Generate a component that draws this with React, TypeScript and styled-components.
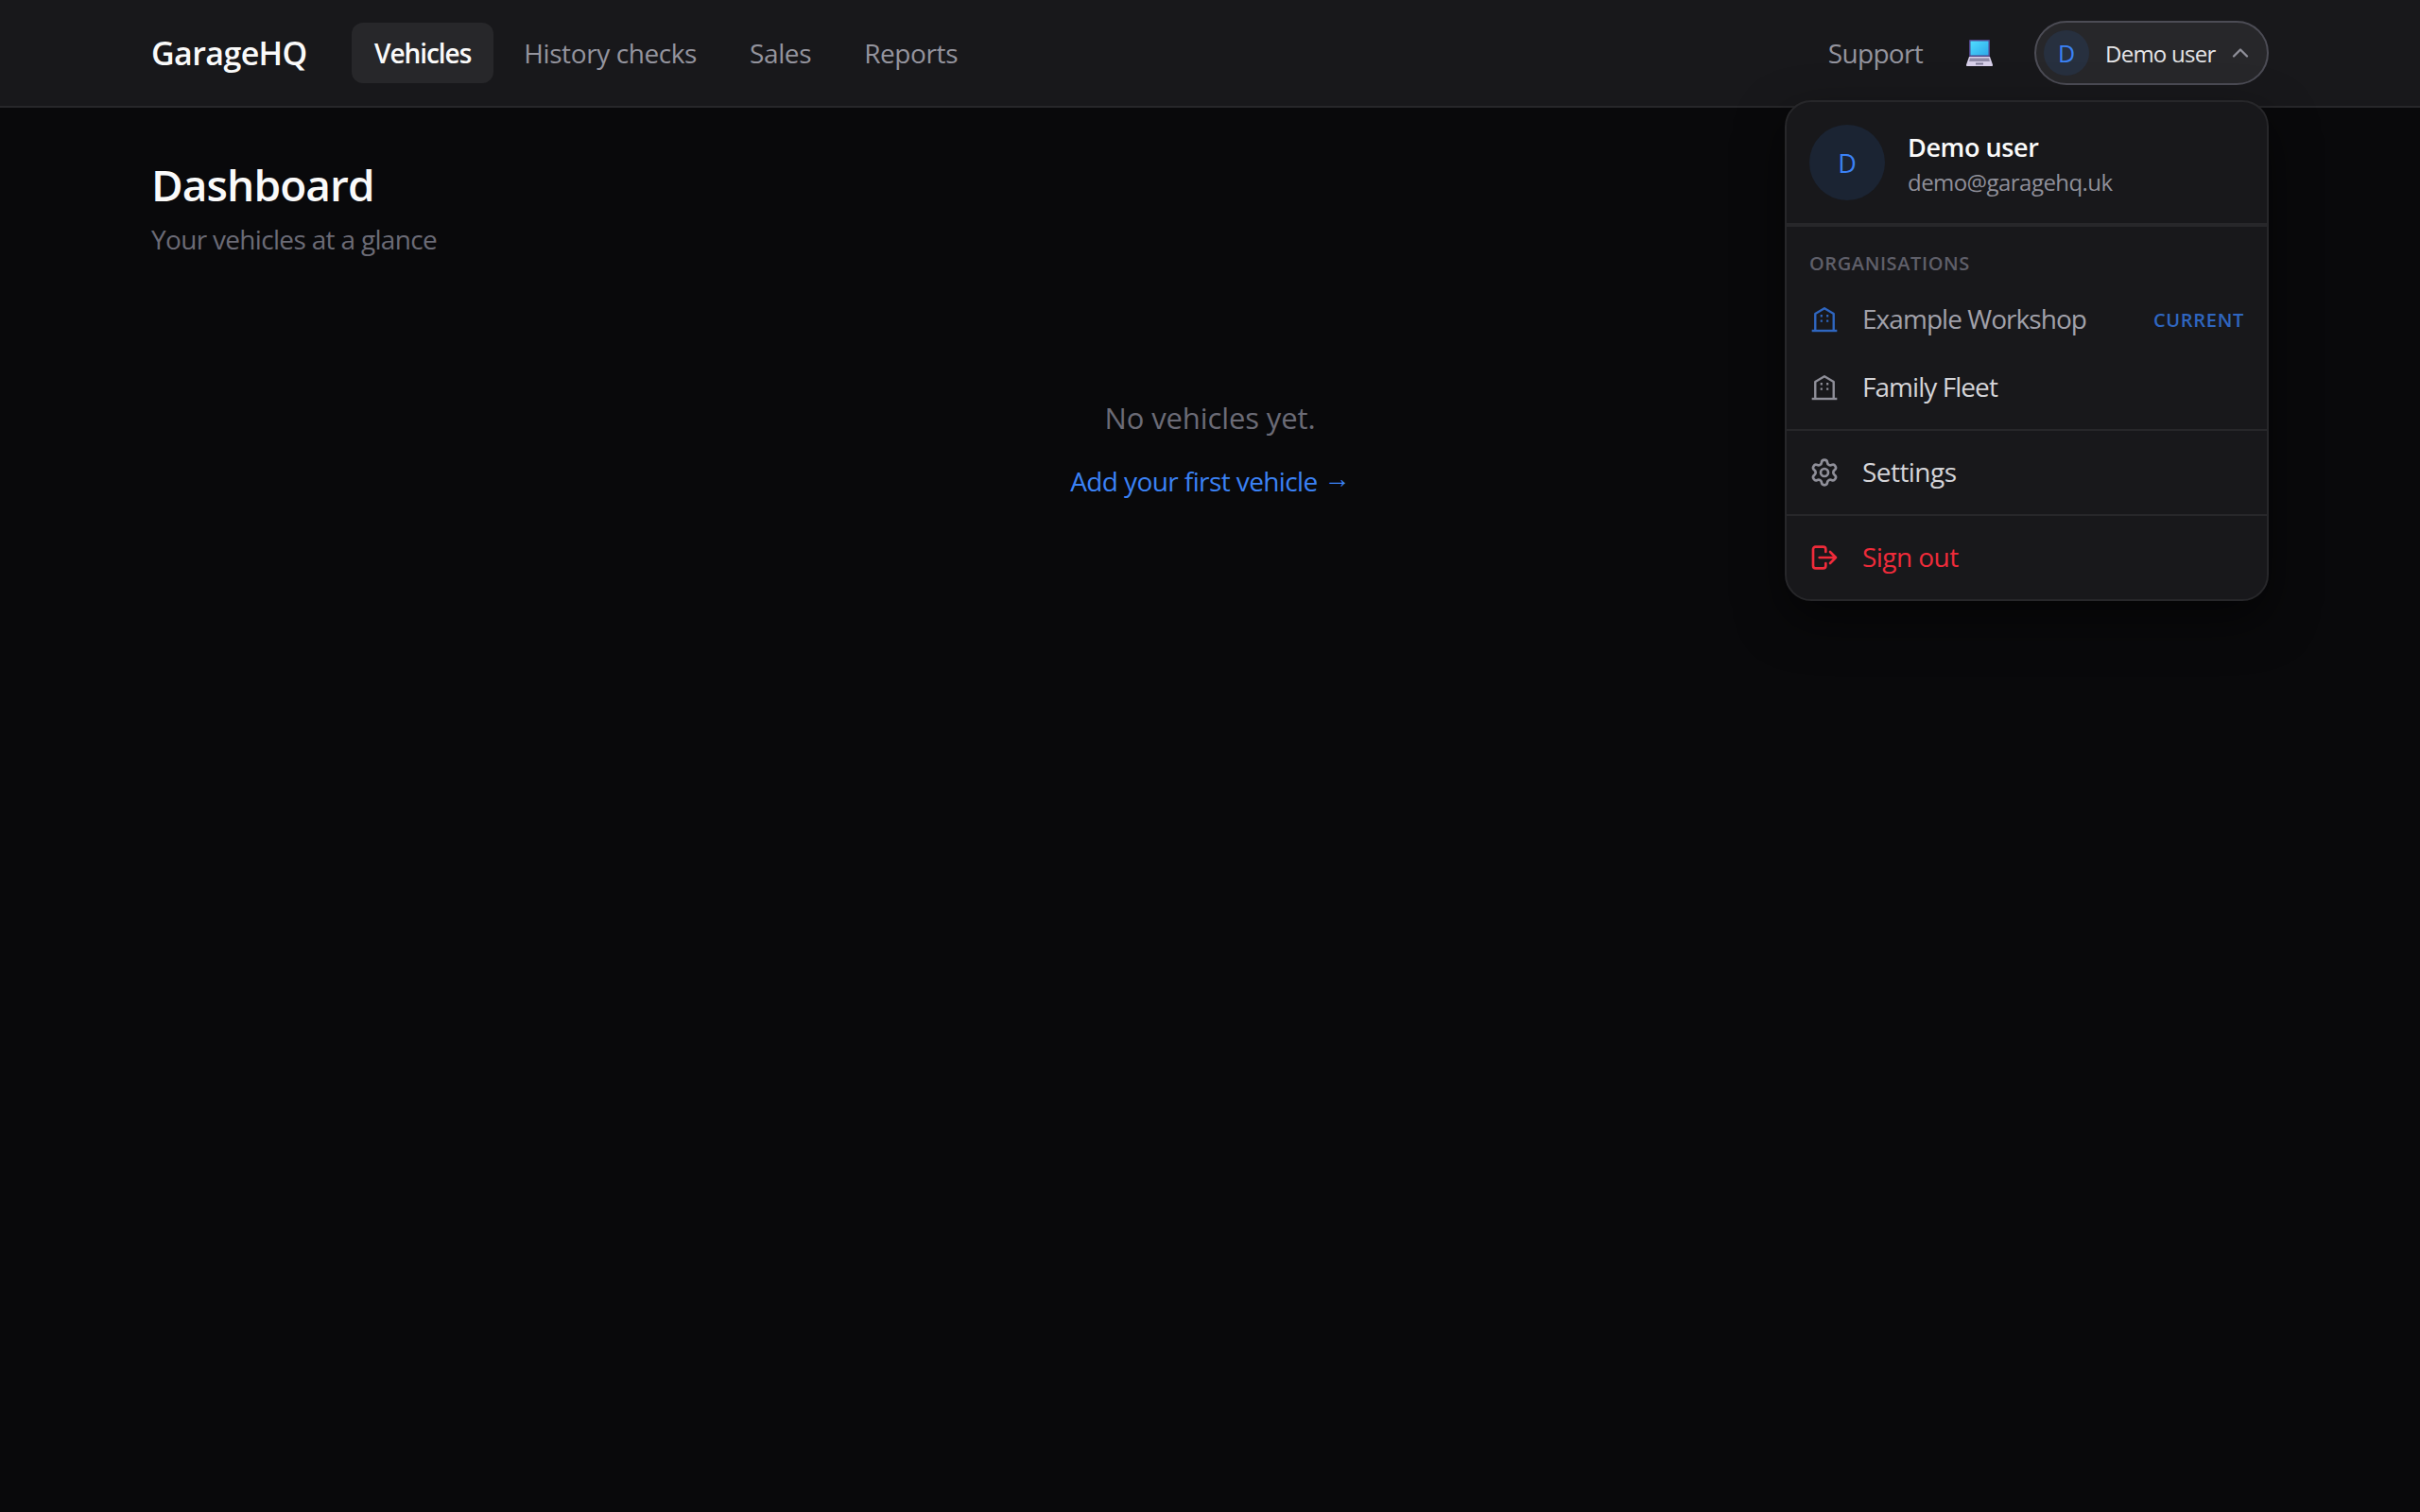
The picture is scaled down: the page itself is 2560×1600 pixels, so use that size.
import React from 'react';
import styled, {createGlobalStyle} from 'styled-components';
import {ChevronUp, Settings} from 'lucide-react';

const GlobalStyle = createGlobalStyle`
html, body {
  margin: 0;
  padding: 0;
  background: #09090b;
}
body {
  font-family: "Open Sans", "Noto Sans", "Liberation Sans", sans-serif;
  min-height: 1600px;
}
* {
  box-sizing: border-box;
}
`

const Header = styled.header`
height: 114px;
background: #18181b;
border-bottom: 2px solid #27272a;
padding: 0 160px;
display: flex;
align-items: center;
justify-content: space-between;
`
const Left = styled.div`
display: flex;
align-items: center;
`
const Brand = styled.a`
width: 212px;
font-size: 34px;
font-weight: 600;
letter-spacing: -0.6px;
color: #fafafa;
`
const Nav = styled.nav`
display: flex;
align-items: center;
gap: 8px;
`
const NavLink = styled.a<{$active?: boolean}>`
height: 64px;
padding: 0 24px;
display: flex;
align-items: center;
border-radius: 12px;
font-size: 28px;
font-weight: ${p => (p.$active ? 600 : 500)};
letter-spacing: ${p => (p.$active ? '-1.05px' : '-0.4px')};
color: ${p => (p.$active ? '#fafafa' : '#94949e')};
background: ${p => (p.$active ? '#27272a' : 'transparent')};
`
const Right = styled.div`
display: flex;
align-items: center;
gap: 44px;
`
const Support = styled.a`
margin-right: 2px;
font-size: 28px;
letter-spacing: -0.7px;
color: #94949e;
`
const UserMenu = styled.div`
position: relative;
`
const Trigger = styled.button`
height: 68px;
width: 248px;
padding: 0 14px 0 8px;
display: flex;
align-items: center;
border: 2px solid #4c4c55;
border-radius: 34px;
background: #27272a;
font-family: inherit;
color: #8f8f99;
`
const Avatar = styled.span<{$large?: boolean}>`
flex: none;
width: ${p => (p.$large ? 80 : 48)}px;
height: ${p => (p.$large ? 80 : 48)}px;
border-radius: 50%;
display: flex;
align-items: center;
justify-content: center;
font-size: ${p => (p.$large ? 27 : 25)}px;
font-weight: 500;
color: #3b82f6;
background: ${p => (p.$large ? '#1b2433' : '#27303f')};
`
const TriggerName = styled.span`
flex: 1;
margin-left: 17px;
padding-top: 1px;
text-align: left;
font-size: 24px;
letter-spacing: -0.75px;
color: #e4e4e7;
`
const Dropdown = styled.div`
position: absolute;
top: 84px;
right: 0;
width: 512px;
border: 2px solid #27272a;
border-radius: 28px;
background: #18181b;
box-shadow: 0 20px 50px rgba(0, 0, 0, 0.5);
overflow: hidden;
`
const UserInfo = styled.div`
height: 132px;
padding: 24px;
display: flex;
align-items: center;
gap: 24px;
border-bottom: 4px solid #27272a;
`
const UserText = styled.div`
padding-top: 2px;
display: flex;
flex-direction: column;
`
const UserName = styled.div`
font-size: 27px;
line-height: 38px;
font-weight: 600;
letter-spacing: -0.4px;
color: #fafafa;
`
const UserEmail = styled.div`
font-size: 24px;
line-height: 35px;
letter-spacing: -0.55px;
color: #8f8f99;
`
const Section = styled.div<{$last?: boolean}>`
padding: 8px 0;
border-bottom: ${p => (p.$last ? 'none' : '2px solid #27272a')};
`
const SectionLabel = styled.div`
padding: 16px 24px 8px;
font-size: 20px;
line-height: 30px;
font-weight: 600;
letter-spacing: 0.6px;
color: #5f5f69;
`
const Row = styled.a<{$tone?: string; $tight?: boolean}>`
height: 72px;
padding: 0 24px;
display: flex;
align-items: center;
gap: 24px;
font-size: 28px;
letter-spacing: ${p => (p.$tight ? '-0.95px' : '-0.55px')};
color: ${p => p.$tone || '#d4d4d8'};
`
const RowIcon = styled.span<{$tone?: string}>`
flex: none;
width: 32px;
height: 32px;
display: flex;
color: ${p => p.$tone || '#8f8f99'};
`
const RowLabel = styled.span`
flex: 1;
padding-bottom: 2px;
`
const CurrentTag = styled.span`
font-size: 20px;
font-weight: 600;
letter-spacing: 0.7px;
color: #2f66c0;
`
const Main = styled.main`
padding: 49px 160px 0;
`
const Title = styled.h1`
margin: 0;
font-size: 46px;
line-height: 64px;
font-weight: 600;
letter-spacing: -0.9px;
color: #fafafa;
`
const Subtitle = styled.p`
margin: 6px 0 0;
font-size: 28px;
line-height: 40px;
letter-spacing: -0.68px;
color: #6b6b76;
`
const Empty = styled.div`
margin-top: 145px;
display: flex;
flex-direction: column;
align-items: center;
`
const EmptyText = styled.p`
margin: 0;
font-size: 31px;
line-height: 48px;
letter-spacing: -0.1px;
color: #6b6b76;
`
const AddLink = styled.a`
margin-top: 21px;
font-size: 28px;
line-height: 44px;
letter-spacing: -0.6px;
color: #3b82f6;
`
const Arrow = styled.span`
font-family: "Liberation Sans", sans-serif;
line-height: 1;
vertical-align: 4px;
`

const BuildingIcon = () => (
    <svg width="32" height="32" viewBox="0 0 24 24" fill="none" stroke="currentColor" strokeWidth="1.8" strokeLinejoin="round">
        <path d="M4.7 21V7.5L12 3.2l7.3 4.3V21"/>
        <path d="M2 21h20"/>
        <path d="M8.8 9.2h1.6M13.6 9.2h1.6M8.8 13.2h1.6M13.6 13.2h1.6"/>
    </svg>
)

const SignOutIcon = () => (
    <svg width="32" height="32" viewBox="0 0 24 24" fill="none" stroke="currentColor" strokeWidth="2" strokeLinecap="round" strokeLinejoin="round">
        <path d="M13 7.5V5.5a2 2 0 0 0-2-2H5a2 2 0 0 0-2 2v13a2 2 0 0 0 2 2h6a2 2 0 0 0 2-2v-2"/>
        <path d="M8 12h13M16.5 7.5 21 12l-4.5 4.5"/>
    </svg>
)

const LaptopIcon = () => (
    <svg width="28" height="28" viewBox="0 0 28 28">
        <defs>
            <linearGradient id="screen" x1="0" y1="0" x2="1" y2="1">
                <stop offset="0" stopColor="#4fdcff"/>
                <stop offset="1" stopColor="#2fa8e8"/>
            </linearGradient>
        </defs>
        <rect x="3" y="0" width="22" height="18" rx="1" fill="#50458a"/>
        <rect x="4.5" y="1.5" width="19" height="15" fill="url(#screen)"/>
        <path d="M3 18h22l3 8.5a1 1 0 0 1-1 1.5H1a1 1 0 0 1-1-1.5z" fill="#d8d0ea"/>
        <path d="M4 19.5h20l1 3.5H3z" fill="#8f8aa6"/>
        <rect x="10" y="24.5" width="8" height="2" fill="#7f7a96"/>
    </svg>
)

const App = () => {
    return (
        <>
            <GlobalStyle/>
            <Header>
                <Left>
                    <Brand>GarageHQ</Brand>
                    <Nav>
                        <NavLink $active>Vehicles</NavLink>
                        <NavLink>History checks</NavLink>
                        <NavLink>Sales</NavLink>
                        <NavLink>Reports</NavLink>
                    </Nav>
                </Left>
                <Right>
                    <Support>Support</Support>
                    <LaptopIcon/>
                    <UserMenu>
                        <Trigger>
                            <Avatar>D</Avatar>
                            <TriggerName>Demo user</TriggerName>
                            <ChevronUp size={28} strokeWidth={2}/>
                        </Trigger>
                        <Dropdown>
                            <UserInfo>
                                <Avatar $large>D</Avatar>
                                <UserText>
                                    <UserName>Demo user</UserName>
                                    <UserEmail>demo@garagehq.uk</UserEmail>
                                </UserText>
                            </UserInfo>
                            <Section>
                                <SectionLabel>ORGANISATIONS</SectionLabel>
                                <Row $tone="#a1a1aa" $tight>
                                    <RowIcon $tone="#2f66c0"><BuildingIcon/></RowIcon>
                                    <RowLabel>Example Workshop</RowLabel>
                                    <CurrentTag>CURRENT</CurrentTag>
                                </Row>
                                <Row $tight>
                                    <RowIcon><BuildingIcon/></RowIcon>
                                    <RowLabel>Family Fleet</RowLabel>
                                </Row>
                            </Section>
                            <Section>
                                <Row>
                                    <RowIcon><Settings size={32} strokeWidth={2}/></RowIcon>
                                    <RowLabel>Settings</RowLabel>
                                </Row>
                            </Section>
                            <Section $last>
                                <Row $tone="#ef2b3a">
                                    <RowIcon $tone="#ef2b3a"><SignOutIcon/></RowIcon>
                                    <RowLabel>Sign out</RowLabel>
                                </Row>
                            </Section>
                        </Dropdown>
                    </UserMenu>
                </Right>
            </Header>
            <Main>
                <Title>Dashboard</Title>
                <Subtitle>Your vehicles at a glance</Subtitle>
                <Empty>
                    <EmptyText>No vehicles yet.</EmptyText>
                    <AddLink>Add your first vehicle <Arrow>→</Arrow></AddLink>
                </Empty>
            </Main>
        </>
    );
};

export default App;
